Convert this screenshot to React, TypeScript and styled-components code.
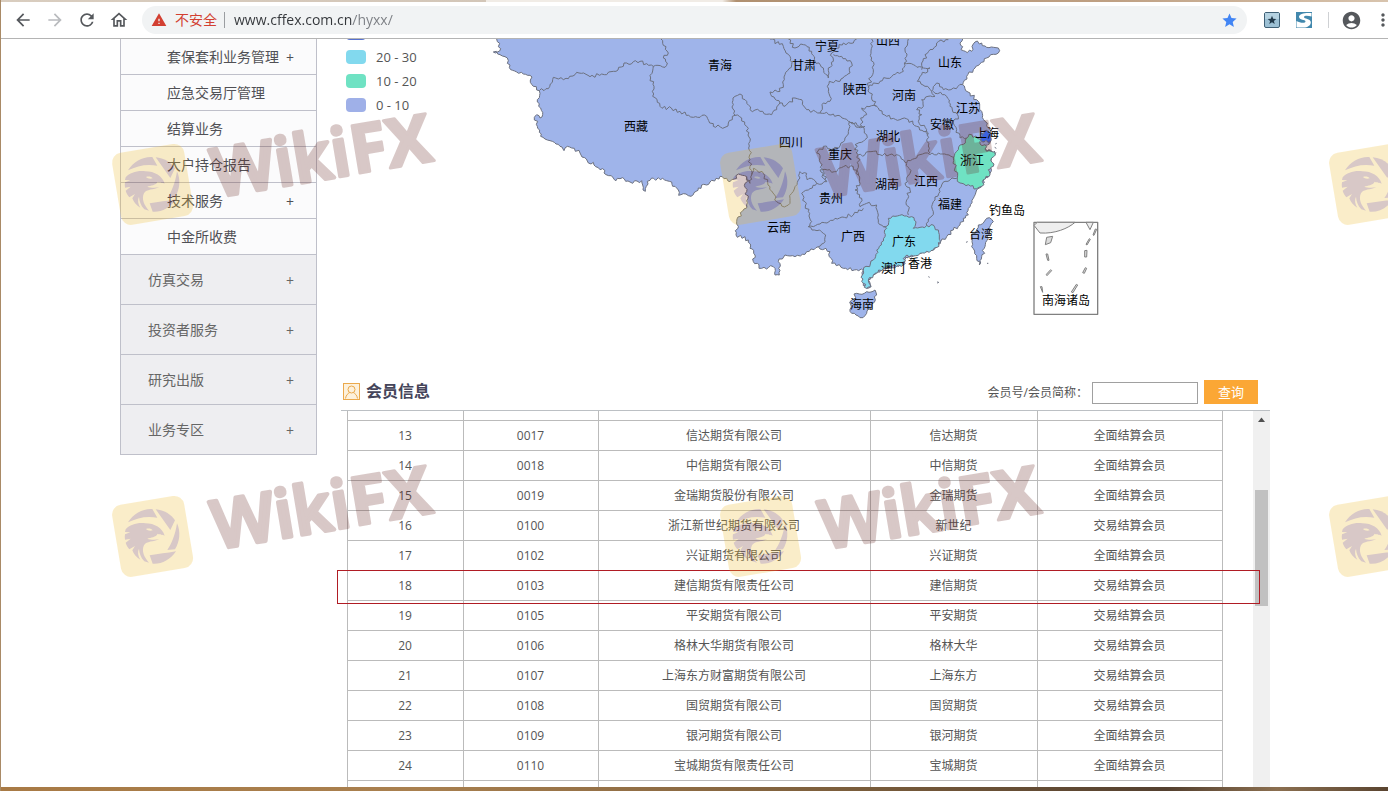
import React from "react";
import styled, { createGlobalStyle } from "styled-components";
import {
  MdAccountCircle,
  MdArrowBack,
  MdArrowForward,
  MdMoreVert,
  MdOutlineHome,
  MdRefresh,
  MdStar,
  MdWarning,
} from "react-icons/md";

const GlobalStyle = createGlobalStyle`
  *, *::before, *::after { box-sizing: border-box; }
  body {
    margin: 0;
    background: #fff;
    font-family: "Open Sans", "Noto Sans CJK SC", sans-serif;
    font-size: 12px;
    color: #555;
  }
  button, input { font: inherit; }
`;

/* ---------- browser window ---------- */

const Window = styled.div`
  position: relative;
  display: flex;
  flex-direction: column;
  height: 100vh;
  overflow: hidden;
  border-left: 1px solid #a98a66;
`;

const TabStrip = styled.div`
  flex: none;
  height: 2px;
  background: linear-gradient(90deg, #d9cdbf 0%, #d3c6b8 35%, #f1ece6 35%, #f1ece6 52%, #b09070 53%, #bfa083 80%, #d8c4ae 100%);
`;

const BottomEdge = styled.div`
  flex: none;
  height: 4px;
  background: linear-gradient(90deg, #a87a45 0%, #a9804f 30%, #7d5f3c 60%, #54402f 84%, #8b6f50 92%, #5a4430 100%);
`;

const Toolbar = styled.header`
  flex: none;
  display: flex;
  align-items: center;
  height: 37px;
  padding-left: 12px;
  border-bottom: 1px solid #b4b4b4;
  background: #fff;
`;

const NavButtons = styled.nav`
  display: flex;
  gap: 12px;
  margin-right: 13px;
`;

const ToolButton = styled.button<{ $muted?: boolean }>`
  display: flex;
  flex: none;
  padding: 0;
  border: 0;
  background: none;
  color: ${(p) => (p.$muted ? "#b9bbbe" : "#55585c")};
`;

const AddressBar = styled.div`
  flex: 1;
  display: flex;
  align-items: center;
  height: 28px;
  padding: 0 9px;
  border-radius: 14px;
  background: #f1f3f4;
  font-size: 14px;
`;

const Insecure = styled.span`
  display: flex;
  align-items: center;
  gap: 8px;
  padding-right: 7px;
  border-right: 1px solid #9a9da1;
  line-height: 16px;
  color: #d23f31;
`;

/* The host is dark and the path after it is grey. */
const Url = styled.input`
  flex: 1;
  min-width: 0;
  margin-left: 9px;
  padding: 0 0 2px;
  border: 0;
  outline: 0;
  background: linear-gradient(90deg, #33363a 118px, #7b7e83 118px);
  background-clip: text;
  -webkit-background-clip: text;
  color: transparent;
`;

const Extensions = styled.div`
  display: flex;
  align-items: center;
  gap: 16px;
  margin: 0 12px 0 17px;
  padding-right: 16px;
  border-right: 1px solid #cfd1d4;
`;

const MenuGroup = styled.div`
  display: flex;
  align-items: center;
  gap: 11px;
  width: 47px;
`;

/* ---------- page ---------- */

const Viewport = styled.div`
  flex: 1;
  min-height: 0;
  padding-left: 1px;
  overflow: hidden;
  background: #fff;
`;

const Content = styled.div`
  display: flex;
  align-items: flex-start;
  gap: 24px;
  height: 100%;
  max-width: 1150px;
  margin: 0 auto;
`;

const Sidebar = styled.nav`
  flex: none;
  width: 197px;
  border: solid #bfc0ca;
  border-width: 0 1px;
  font-size: 14px;
`;

const MenuItem = styled.a<{ $top?: boolean }>`
  display: flex;
  align-items: center;
  justify-content: space-between;
  height: ${(p) => (p.$top ? 50 : 36)}px;
  padding: 0 22px 2px ${(p) => (p.$top ? 27 : 46)}px;
  border-bottom: 1px solid #bfc0ca;
  background: ${(p) => (p.$top ? "#eeeef1" : "#fbfbfc")};
  color: ${(p) => (p.$top ? "#666" : "#505055")};
  text-decoration: none;
  white-space: nowrap;
`;

const Expand = styled.span`
  padding-top: 4px;
`;

const Main = styled.main`
  flex: 1;
  min-width: 0;
  display: flex;
  flex-direction: column;
  height: 100%;
`;

const MapPanel = styled.section`
  flex: none;
  display: flex;
  align-items: flex-start;
`;

const Legend = styled.ul`
  flex: none;
  width: 100px;
  margin: -18px 0 0;
  padding: 0 0 0 5px;
  list-style: none;
  font-size: 13px;
`;

const LegendItem = styled.li<{ $color: string }>`
  display: flex;
  align-items: center;
  gap: 10px;
  height: 24px;
  &::before {
    content: "";
    width: 20px;
    height: 14px;
    border-radius: 4px;
    background: ${(p) => p.$color};
  }
`;

const MapSvg = styled.svg`
  flex: 1;
  min-width: 0;
  display: block;
  text {
    font-size: 12px;
    fill: #000;
    text-anchor: middle;
  }
`;

const SectionHead = styled.div`
  flex: none;
  display: flex;
  align-items: center;
  height: 38px;
  padding: 0 12px 0 2px;
  border-bottom: 1px solid #bcc0c4;
`;

const SectionTitle = styled.h2`
  margin: 0 auto 0 6px;
  padding-bottom: 2px;
  font-size: 16px;
  line-height: 20px;
  color: #45455a;
`;

const SearchForm = styled.form`
  display: flex;
  align-items: flex-end;
  line-height: 22px;
`;

const SearchInput = styled.input`
  width: 106px;
  height: 22px;
  margin: 0 6px 0 4px;
  padding: 0 4px;
  border: 1px solid #a0a0a0;
  background: #fff;
`;

const SearchButton = styled.button`
  width: 54px;
  height: 24px;
  padding: 0;
  border: 0;
  background: #fba735;
  color: #fff;
  font-size: 13px;
`;

const TableArea = styled.div`
  position: relative;
  flex: 1;
  min-height: 0;
`;

const Scroller = styled.div`
  display: flex;
  height: 100%;
  overflow: hidden;
`;

const TablePane = styled.div`
  flex: 1;
  padding: 0 30px 0 6px;
`;

const MemberTable = styled.table`
  width: 100%;
  table-layout: fixed;
  border-collapse: separate;
  border-spacing: 0;
  border-left: 1px solid #bbb;
`;

const Col = styled.col<{ $w?: number }>`
  width: ${(p) => (p.$w ? `${p.$w}px` : "auto")};
`;

const Row = styled.tr<{ $edge?: boolean }>`
  height: ${(p) => (p.$edge ? 10 : 30)}px;
`;

const Cell = styled.td`
  padding: 0 1px 0 0;
  border: solid #bbb;
  border-width: 0 1px 1px 0;
  line-height: 16px;
  text-align: center;
`;

const ScrollTrack = styled.div`
  flex: none;
  display: flex;
  flex-direction: column;
  align-items: center;
  width: 17px;
  padding-top: 6px;
  background: #f0f0f0;
`;

const ScrollThumb = styled.div`
  width: 13px;
  height: 116px;
  margin-top: 68px;
  background: #c1c1c1;
`;

const Highlight = styled.div`
  position: absolute;
  top: 159px;
  left: -4px;
  right: 10px;
  height: 34px;
  border: 1px solid #b01c24;
`;

const WatermarkLayer = styled.svg`
  position: absolute;
  inset: 0;
  width: 100%;
  height: 100%;
  pointer-events: none;
`;

/* ---------- data ---------- */

const subMenu = [
  { label: "套保套利业务管理", more: true },
  { label: "应急交易厅管理" },
  { label: "结算业务" },
  { label: "大户持仓报告" },
  { label: "技术服务", more: true },
  { label: "中金所收费" },
];

const topMenu = ["仿真交易", "投资者服务", "研究出版", "业务专区"];

const members = [
  ["13", "0017", "信达期货有限公司", "信达期货", "全面结算会员"],
  ["14", "0018", "中信期货有限公司", "中信期货", "全面结算会员"],
  ["15", "0019", "金瑞期货股份有限公司", "金瑞期货", "全面结算会员"],
  ["16", "0100", "浙江新世纪期货有限公司", "新世纪", "交易结算会员"],
  ["17", "0102", "兴证期货有限公司", "兴证期货", "全面结算会员"],
  ["18", "0103", "建信期货有限责任公司", "建信期货", "交易结算会员"],
  ["19", "0105", "平安期货有限公司", "平安期货", "交易结算会员"],
  ["20", "0106", "格林大华期货有限公司", "格林大华", "交易结算会员"],
  ["21", "0107", "上海东方财富期货有限公司", "上海东方", "交易结算会员"],
  ["22", "0108", "国贸期货有限公司", "国贸期货", "交易结算会员"],
  ["23", "0109", "银河期货有限公司", "银河期货", "全面结算会员"],
  ["24", "0110", "宝城期货有限责任公司", "宝城期货", "全面结算会员"],
];

const provinces: [string, number, number][] = [
  ["青海", 720, 66], ["西藏", 636, 127], ["宁夏", 827, 47], ["山西", 888, 41],
  ["甘肃", 804, 66], ["陕西", 855, 90], ["河南", 904, 96], ["山东", 950, 63],
  ["江苏", 968, 109], ["安徽", 942, 125], ["上海", 987, 134], ["四川", 791, 143],
  ["重庆", 840, 155], ["湖北", 888, 137], ["浙江", 972, 161], ["湖南", 887, 185],
  ["江西", 926, 182], ["贵州", 831, 199], ["福建", 950, 205], ["云南", 779, 228],
  ["广西", 853, 237], ["广东", 904, 242], ["澳门", 893, 269], ["香港", 920, 264],
  ["台湾", 981, 235], ["钓鱼岛", 1007, 211], ["海南", 862, 305], ["南海诸岛", 1066, 301],
];

/* ---------- map geometry ---------- */

type Point = [number, number];

const points = (text: string, dx = 0, dy = 0): Point[] =>
  text.trim().split(/\s+/).map((pair) => {
    const [x, y] = pair.split(",").map(Number);
    return [x + dx, y + dy];
  });

// The survey sheets: the centre one is the origin, the others are offset from it.
const centre = (text: string) => points(text);
const west = (text: string) => points(text, -720, 0);
const south = (text: string) => points(text, 0, 336);

const noise = (x: number, y: number) => {
  const n = Math.sin(x * 12.9898 + y * 78.233) * 43758.5453;
  return n - Math.floor(n) - 0.5;
};

// Adds the small irregularities of a natural border to a coarse outline.
const border = (list: Point[], closed = false) => {
  const pts = closed ? [...list, list[0]] : list;
  let d = `M${pts[0][0]} ${pts[0][1]}`;
  for (let i = 1; i < pts.length; i++) {
    const [ax, ay] = pts[i - 1];
    const [bx, by] = pts[i];
    const len = Math.hypot(bx - ax, by - ay);
    const steps = Math.max(1, Math.round(len / 7));
    for (let s = 1; s < steps; s++) {
      const t = s / steps;
      const x = ax + (bx - ax) * t;
      const y = ay + (by - ay) * t;
      const off = noise(x, y) * 11;
      d += `L${Math.round(x - ((by - ay) / len) * off)} ${Math.round(y + ((bx - ax) / len) * off)}`;
    }
    d += `L${bx} ${by}`;
  }
  return closed ? `${d}Z` : d;
};

const mainland = border(
  [
    ...west("50,-6 50,3 62,32 52,42 40,42 60,50 75,56 85,68 92,95 110,102 150,112 160,145 178,158 172,185 182,210 188,230 180,240 170,230 163,238 172,265 182,295 210,308 240,325 252,338 262,325 275,330 300,345 325,375 340,373 360,395 375,398 378,410 400,420 408,428 420,422 450,432 485,428 490,448 496,460 502,430 515,420 560,428 575,432 578,445 590,450 596,472 640,470 655,450 690,432 720,415"),
    ...south("30,95 50,85 55,72 80,80 75,100 80,125 80,165 50,215 48,255 85,270 90,295 105,315 100,335 125,355 160,350 165,375 178,375 175,335 195,315 225,320 260,305 295,290 330,305 335,340 370,355 430,362 427,375 430,400 440,415 453,410 445,390 460,375 490,355 550,345 555,320 580,318 600,310 640,300 662,275 680,260 700,240 720,225 730,205 745,195 745,175 760,145 770,120 785,110 790,90 810,70 810,50"),
    ...centre("815,360 825,340 800,340 795,322 812,308 805,270 795,250 785,220 770,185 750,165 728,140 740,115 765,90 800,60 835,45 835,30 800,28 785,15 765,12 755,40 730,38 722,22 728,3 728,-6"),
  ],
  true
);

const guangdong = border(
  south("430,362 465,325 470,300 495,260 500,235 490,230 505,225 505,205 560,198 575,200 588,215 580,235 600,232 640,225 655,240 662,275 640,300 600,310 580,318 555,320 550,345 490,355 460,375 445,390 453,410 440,415 430,400 427,375"),
  true
);

const zhejiang = border(
  centre("700,360 715,335 740,300 755,290 785,305 780,318 800,326 800,340 825,342 815,360 820,385 805,395 810,410 790,425 785,445 770,452 745,440 720,435 712,420 705,390"),
  true
);

const shanghai = border(centre("784,286 800,277 814,290 812,310 792,312 782,304"), true);

const hainan = border(
  south("395,450 410,430 440,425 465,420 470,435 455,470 440,490 420,503 395,490 393,465"),
  true
);

const taiwan = border(
  south("800,205 815,208 812,240 795,290 785,320 778,345 770,325 755,290 757,260 775,225"),
  true
);

const innerBorders = [
  west("178,158 205,152 220,118 265,122 290,103 330,116 400,100 440,75 480,70 520,85"),
  west("543,3 565,45 550,60 562,75 555,88 520,85"),
  west("520,85 512,120 522,145 518,175 540,205 600,220 640,238 680,235 700,265 735,268 745,255 765,232"),
  centre("45,232 40,200 45,175 60,168 75,185 90,215 120,220 155,230 170,215 180,195 195,205 225,180 245,185 260,215 300,225"),
  centre("150,3 190,25 210,55 215,80 195,110 190,140 180,160 150,162 155,175 180,195"),
  centre("45,232 65,240 80,265 90,310 90,385 95,410"),
  south("80,80 90,100 95,75 100,55 130,70 150,110 170,155 185,168 210,160 215,130 235,90 240,65 260,70 262,90 280,88 290,100 320,95"),
  centre("388,252 390,265 375,300 370,312 335,340 310,325 290,345 300,360 310,400 320,430"),
  south("320,95 300,60 350,65 370,50 400,50 415,75"),
  centre("388,250 425,265 440,290 435,305 405,320 415,350 415,380 416,411"),
  centre("205,3 225,30 250,20 275,40 285,70 310,90 325,120 325,90 340,70 335,45 370,15 400,15 410,3"),
  centre("340,50 365,55 395,75 390,105 360,130 328,130 325,160 330,190 310,195 300,225"),
  centre("300,225 340,228 385,250 415,268 435,265"),
  centre("455,3 455,60 460,95 445,145 455,175 470,205"),
  centre("470,205 425,210 440,230 422,240 425,265"),
  centre("445,148 480,130 520,110 550,100 553,75 580,80 610,90"),
  centre("553,75 560,55 555,30 565,3"),
  centre("605,95 605,75 630,35 650,15 685,5"),
  centre("610,90 630,90 600,115 592,130 615,145 635,160"),
  centre("470,205 500,235 540,245 565,245 590,265 625,285"),
  centre("635,160 645,175 605,185 610,205 590,215 605,230 595,250 620,275 625,290"),
  centre("635,160 650,135 670,155 700,150 728,140"),
  centre("640,160 680,175 690,205 715,235 700,255 710,275 720,300 740,300"),
  centre("625,285 620,310 630,345"),
  centre("415,350 435,350 460,340 480,350 530,350 560,375 600,350 630,350 655,345 680,350 700,358"),
  south("712,84 690,90 665,105 660,125 640,155 640,185 625,215 620,228"),
  south("560,40 570,70 555,100 570,120 560,150 565,195"),
  south("415,75 420,100 405,120 425,145 420,170"),
  south("420,170 440,160 470,165 475,210 490,230"),
  south("290,100 265,120 245,130 255,155 265,185 275,215 265,230 300,222 345,205 400,195 430,175"),
  south("265,230 310,250 315,275 295,290"),
];

const ChinaMap = () => (
  <MapSvg viewBox="441 39 829 334" role="img" aria-label="会员分布地图">
    <g transform="translate(720 38) scale(0.33333)" stroke="#6b7080" strokeWidth="3" strokeLinejoin="round">
      <path d={mainland} fill="#9fb4ea" />
      {innerBorders.map((line, i) => (
        <path key={i} d={border(line)} fill="none" />
      ))}
      <path d={guangdong} fill="#82d9ee" />
      <path d={zhejiang} fill="#6fe2c3" />
      <path d={shanghai} fill="#3c62df" />
      <path d={hainan} fill="#9fb4ea" />
      <path d={taiwan} fill="#9fb4ea" />
      <path
        d="M738 613l5-2M801 676h4M625 716l4 2M651 732l5 1l-3 3M826 318l4-2M824 328l5 3M828 344l-4 4M562 658l12-3M570 664l8-2"
        fill="none"
      />
    </g>
    <g transform="translate(940 120) scale(0.33333)" stroke="#808080" strokeWidth="3" strokeLinejoin="round">
      <rect x="282" y="307" width="191" height="276" fill="#fff" strokeWidth="4" />
      <path d="M282 316L292 307H405C385 325 345 342 300 339L282 316Z" fill="#eee" />
      <path d="M438 307L450 329L460 307Z" fill="#eee" />
      <path
        d="M320 352L338 349L332 368L316 374ZM318 402l5 0l4 19l-4 0ZM332 449l3 3l-14 15l-2-4ZM301 500l5 0l2 17ZM434 392l7-1l-1 20l-6 0ZM436 443l4 2l-7 15l-5-2ZM409 493l4 2l-14 23l-5-2ZM466 327l4 1l-8 18l-3-1ZM448 356l3 2l-10 17l-3-2Z"
        fill="#ddd"
      />
    </g>
    {provinces.map(([name, x, y]) => (
      <text key={name} x={x} y={y + 4}>
        {name}
      </text>
    ))}
  </MapSvg>
);

/* ---------- small drawings ---------- */

const MemberIcon = () => (
  <svg width="17" height="17" viewBox="0 0 17 17" fill="none" stroke="#eba94c" aria-hidden="true">
    <rect x="0.5" y="0.5" width="16" height="16" fill="#fdf1dc" />
    <circle cx="8.500" cy="6.500" r="3.500" />
    <path d="M2.500 15.500C3 12 5 10.500 6.500 9.700M14.500 15.500C14 12 12 10.500 10.500 9.700" />
  </svg>
);

const StarExtension = () => (
  <svg width="16" height="16" viewBox="0 0 16 16" aria-hidden="true">
    <rect x="0.500" y="0.500" width="15" height="15" rx="1.500" fill="#9cc0d4" stroke="#3f6076" />
    <path d="M1 1h14v6H1z" fill="#b5d2e1" />
    <path d="M8 3.800l1.200 2.900 3.100.2-2.400 2 .8 3L8 10.300l-2.700 1.600.8-3-2.400-2 3.100-.2z" fill="#22394a" />
  </svg>
);

const SwooshExtension = () => (
  <svg width="16" height="16" viewBox="0 0 16 16" aria-hidden="true">
    <path d="M0 0H16V16H0Z" fill="#4288ad" />
    <path d="M15.500 1C9 .5 3 1.500 3 4.800C3 8.200 9.500 7.500 9.500 9.500C9.500 11.500 4 11 .5 9V15.500H9C13 14.800 15 12.500 14.800 10C14.500 6.500 8 7 8 4.900C8 3.300 12 3.300 15.500 4.500Z" fill="#fff" />
  </svg>
);

interface WatermarkProps {
  x: number;
  y: number;
  logoOnly?: boolean;
}

const Watermark = ({ x, y, logoOnly }: WatermarkProps) => (
  <g transform={`translate(${x} ${y})`} opacity="0.25">
    <rect x="16" y="50" width="73" height="73" rx="10" transform="rotate(-9.5 52 86)" fill="#efbb2b" />
    <g transform="scale(0.33333)">
      <g fill="#682723">
        <path d="M84 217C100 190 130 175 157 177L172 203C140 197 112 203 84 217Z" />
        <path d="M167 178C192 180 214 194 225 211L211 240Z" />
        <path d="M231 220C243 246 239 276 225 298L202 300C214 283 226 255 231 220Z" />
        <path d="M228 304C210 331 184 343 158 341L149 316C176 312 200 309 228 304Z" />
        <path d="M77 238C90 224 112 217 136 220C164 220 187 234 194 257C187 252 181 257 173 251C168 262 152 262 142 266C150 270 166 270 178 268C160 276 140 273 132 286C124 302 132 322 147 338L133 334C122 322 118 310 117 296C112 306 114 318 121 329C109 322 101 313 97 301L105 288L88 298C83 292 79 285 77 278L92 266L75 269C74 263 74 258 75 253L91 247L75 246Z" />
        <path d="M138 237C146 234 154 236 158 241C150 243 143 242 138 237Z" fill="#efbb2b" />
      </g>
    </g>
    {!logoOnly && (
      <text
        y="117"
        transform="rotate(-9.5)"
        fontFamily="'Open Sans', sans-serif"
        fontWeight="600"
        fontSize="67"
        fill="#682723"
        stroke="#682723"
        strokeWidth="4"
        strokeLinejoin="round"
      >
        <tspan x="98">Wiki</tspan>
        <tspan x="238" fontWeight="700" strokeWidth="3">FX</tspan>
      </text>
    )}
  </g>
);

/* ---------- app ---------- */

export default function App() {
  return (
    <Window>
      <GlobalStyle />
      <TabStrip />
      <Toolbar>
        <NavButtons>
          <ToolButton aria-label="后退"><MdArrowBack size={20} /></ToolButton>
          <ToolButton aria-label="前进" $muted><MdArrowForward size={20} /></ToolButton>
          <ToolButton aria-label="刷新"><MdRefresh size={20} /></ToolButton>
          <ToolButton aria-label="主页"><MdOutlineHome size={20} /></ToolButton>
        </NavButtons>
        <AddressBar>
          <Insecure><MdWarning size={16} />不安全</Insecure>
          <Url aria-label="地址" defaultValue="www.cffex.com.cn/hyxx/" />
          <MdStar size={17} color="#4285f4" />
        </AddressBar>
        <Extensions>
          <StarExtension />
          <SwooshExtension />
        </Extensions>
        <MenuGroup>
          <ToolButton aria-label="帐户"><MdAccountCircle size={21} /></ToolButton>
          <ToolButton aria-label="菜单"><MdMoreVert size={20} /></ToolButton>
        </MenuGroup>
      </Toolbar>

      <Viewport>
        <Content>
          <Sidebar>
            {subMenu.map((item) => (
              <MenuItem key={item.label} href="#">
                {item.label}
                {item.more && <Expand>+</Expand>}
              </MenuItem>
            ))}
            {topMenu.map((label) => (
              <MenuItem key={label} href="#" $top>
                {label}
                <Expand>+</Expand>
              </MenuItem>
            ))}
          </Sidebar>

          <Main>
            <MapPanel>
              <Legend>
                <LegendItem $color="#5570cf" />
                <LegendItem $color="#82d9ee">20 - 30</LegendItem>
                <LegendItem $color="#6fe2c3">10 - 20</LegendItem>
                <LegendItem $color="#9fb0e8">0 - 10</LegendItem>
              </Legend>
              <ChinaMap />
            </MapPanel>

            <SectionHead>
              <MemberIcon />
              <SectionTitle>会员信息</SectionTitle>
              <SearchForm onSubmit={(e) => e.preventDefault()}>
                <label htmlFor="member">会员号/会员简称：</label>
                <SearchInput id="member" type="text" />
                <SearchButton type="submit">查询</SearchButton>
              </SearchForm>
            </SectionHead>

            <TableArea>
              <Scroller>
                <TablePane>
                  <MemberTable>
                    <colgroup>
                      <Col $w={116} />
                      <Col $w={135} />
                      <Col />
                      <Col $w={167} />
                      <Col $w={185} />
                    </colgroup>
                    <tbody>
                      <Row $edge>
                        <Cell /><Cell /><Cell /><Cell /><Cell />
                      </Row>
                      {members.map((member) => (
                        <Row key={member[0]}>
                          {member.map((value, i) => (
                            <Cell key={i}>{value}</Cell>
                          ))}
                        </Row>
                      ))}
                      <Row>
                        <Cell /><Cell /><Cell /><Cell /><Cell />
                      </Row>
                    </tbody>
                  </MemberTable>
                </TablePane>
                <ScrollTrack aria-hidden="true">
                  <svg width="7" height="5" viewBox="0 0 7 5"><path d="M0 5L3.500 0.500L7 5Z" fill="#505050" /></svg>
                  <ScrollThumb />
                </ScrollTrack>
              </Scroller>
              <Highlight />
            </TableArea>
          </Main>
        </Content>
      </Viewport>
      <BottomEdge />

      <WatermarkLayer aria-hidden="true">
        {[98, 450].map((y) => (
          <g key={y}>
            <Watermark x={99} y={y} />
            <Watermark x={707} y={y} />
            <Watermark x={1316} y={y} logoOnly />
          </g>
        ))}
      </WatermarkLayer>
    </Window>
  );
}
